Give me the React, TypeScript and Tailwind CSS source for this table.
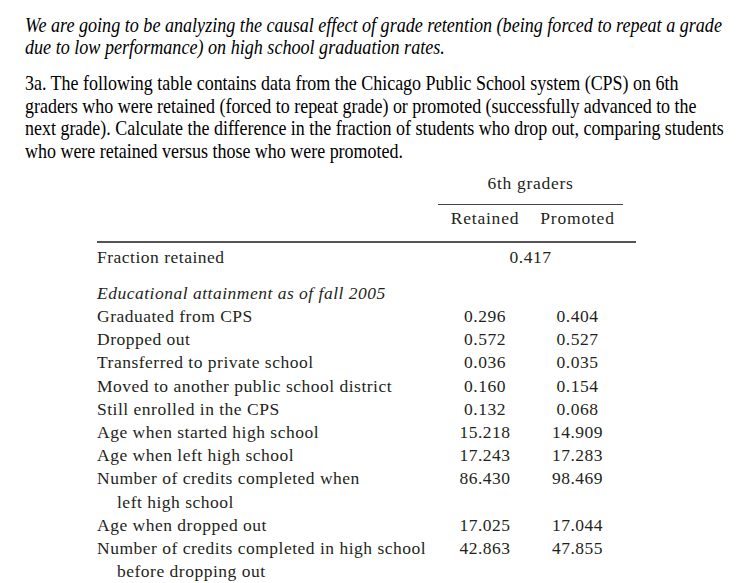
import React from "react";

const rows: { label: string[]; r?: string; p?: string }[] = [
  { label: ["Graduated from CPS"], r: "0.296", p: "0.404" },
  { label: ["Dropped out"], r: "0.572", p: "0.527" },
  { label: ["Transferred to private school"], r: "0.036", p: "0.035" },
  { label: ["Moved to another public school district"], r: "0.160", p: "0.154" },
  { label: ["Still enrolled in the CPS"], r: "0.132", p: "0.068" },
  { label: ["Age when started high school"], r: "15.218", p: "14.909" },
  { label: ["Age when left high school"], r: "17.243", p: "17.283" },
  { label: ["Number of credits completed when", "left high school"], r: "86.430", p: "98.469" },
  { label: ["Age when dropped out"], r: "17.025", p: "17.044" },
  { label: ["Number of credits completed in high school", "before dropping out"], r: "42.863", p: "47.855" },
];

export default function App() {
  return (
    <div className="w-[748px] h-[583px] bg-white overflow-hidden" style={{ fontFamily: '"Liberation Serif", "Times New Roman", serif' }}>
      <div className="pl-[25px] pt-[14px] text-black text-[21px] whitespace-nowrap">
        <p className="italic leading-[22px] origin-left scale-x-[0.862]">
          We are going to be analyzing the causal effect of grade retention (being forced to repeat a grade
          <br />
          due to low performance) on high school graduation rates.
        </p>
        <p className="mt-[14px] leading-[22.5px] origin-left scale-x-[0.855]">
          3a. The following table contains data from the Chicago Public School system (CPS) on 6th
          <br />
          graders who were retained (forced to repeat grade) or promoted (successfully advanced to the
          <br />
          next grade). Calculate the difference in the fraction of students who drop out, comparing students
          <br />
          who were retained versus those who were promoted.
        </p>
      </div>
      <div className="ml-[97px] w-[539px] mt-[10px] text-[17.5px] leading-[23px] text-[#231f20] whitespace-nowrap tracking-[0.5px]">
        <div className="grid grid-cols-[341px_185px_13px]">
          <div />
          <div className="flex flex-col items-center">
            <div className="pb-[9px] tracking-[0.7px]">6th graders</div>
            <div className="w-full h-px bg-[#444]" />
          </div>
          <div />
        </div>
        <div className="grid grid-cols-[341px_94px_91px] pt-[2px] pb-[11px] tracking-[0.8px]">
          <div />
          <div className="text-center">Retained</div>
          <div className="text-center">Promoted</div>
        </div>
        <div className="h-[2px] bg-[#555]" />
        <div className="grid grid-cols-[341px_185px] pt-[3px]">
          <div>Fraction retained</div>
          <div className="text-center">0.417</div>
        </div>
        <div className="italic mt-[13px]">Educational attainment as of fall 2005</div>
        <div className="leading-[23.2px]">
          {rows.map((row, i) => (
            <div key={i} className="grid grid-cols-[341px_94px_91px]">
              <div>
                {row.label.map((l, j) => (
                  <div key={j} className={j > 0 ? "pl-[20px]" : ""}>{l}</div>
                ))}
              </div>
              <div className="text-center">{row.r}</div>
              <div className="text-center">{row.p}</div>
            </div>
          ))}
        </div>
      </div>
    </div>
  );
}
